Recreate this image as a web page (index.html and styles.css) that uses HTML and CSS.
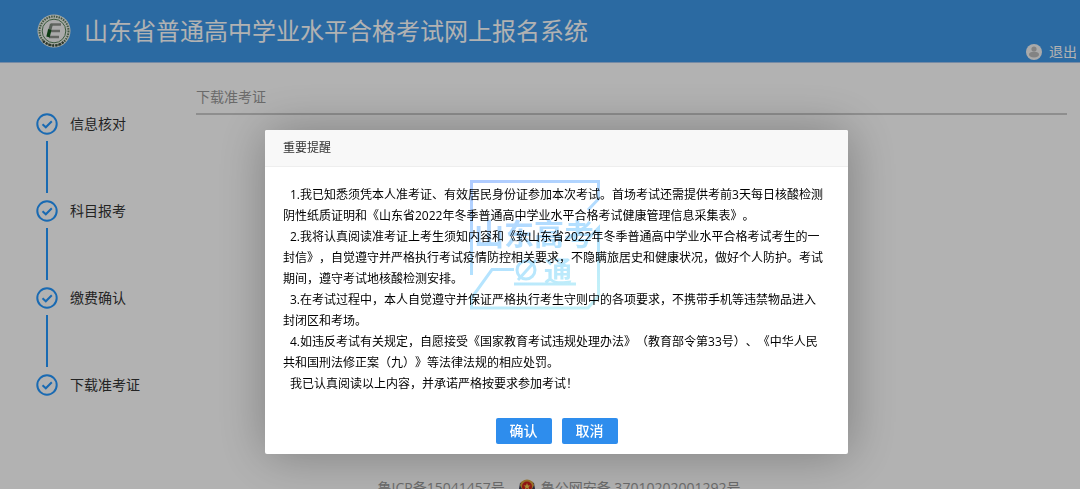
FILE: index.html
```
<!DOCTYPE html>
<html lang="zh-CN">
<head>
  <meta charset="UTF-8">
  <meta name="viewport" content="width=device-width, initial-scale=1.0">
  <title>山东省普通高中学业水平合格考试网上报名系统</title>
  <link rel="stylesheet" href="styles.css">
</head>
<body>
  <!-- Header -->
  <header class="header">
    <svg class="logo" viewBox="0 0 34 34" aria-hidden="true">
      <circle cx="17" cy="17" r="16.5" fill="#eef3ea"/>
      <circle cx="17" cy="17" r="14.5" fill="none" stroke="#5d7a60" stroke-width="2" stroke-dasharray="1.5 1"/>
      <circle cx="17" cy="17" r="11.8" fill="#f4f4f4" stroke="#54805a" stroke-width="1"/>
      <path d="M6 27Q17 36 28 27" fill="none" stroke="#3c4a3e" stroke-width="2.4" stroke-dasharray="2 1.4"/>
      <path d="M14 10.5H24M13 17H23M12 23H22" fill="none" stroke="#8d918c" stroke-width="2.4"/>
      <path d="M14.5 10L12.8 16" stroke="#7d8a7e" stroke-width="3"/>
      <path d="M12.8 15.5L11 23" stroke="#14571c" stroke-width="3.4"/>
    </svg>
    <h1 class="site-title">山东省普通高中学业水平合格考试网上报名系统</h1>
    <a href="#" class="logout">
      <svg class="avatar" viewBox="0 0 16 16" aria-hidden="true">
        <circle cx="8" cy="8" r="8" fill="#f4f4f4"/>
        <circle cx="8" cy="5" r="2.6" fill="#bcbcbc"/>
        <ellipse cx="8" cy="10.6" rx="5" ry="2.8" fill="#bcbcbc"/>
      </svg>
      退出
    </a>
  </header>

  <!-- Steps and page content -->
  <div class="page">
    <ol class="steps">
      <li class="step"><svg class="check" viewBox="0 0 22 22" aria-hidden="true"><circle cx="11" cy="11" r="9.7"/><path d="M6.5 11.3L9.8 14.3L15.8 8.3"/></svg>信息核对</li>
      <li class="step"><svg class="check" viewBox="0 0 22 22" aria-hidden="true"><circle cx="11" cy="11" r="9.7"/><path d="M6.5 11.3L9.8 14.3L15.8 8.3"/></svg>科目报考</li>
      <li class="step"><svg class="check" viewBox="0 0 22 22" aria-hidden="true"><circle cx="11" cy="11" r="9.7"/><path d="M6.5 11.3L9.8 14.3L15.8 8.3"/></svg>缴费确认</li>
      <li class="step"><svg class="check" viewBox="0 0 22 22" aria-hidden="true"><circle cx="11" cy="11" r="9.7"/><path d="M6.5 11.3L9.8 14.3L15.8 8.3"/></svg>下载准考证</li>
    </ol>
    <main class="content">
      <h2 class="content-title">下载准考证</h2>
    </main>
  </div>

  <footer class="footer">
    <span>鲁ICP备15041457号</span>
    <svg class="police" viewBox="0 0 18 18" aria-hidden="true">
      <path d="M9 1L16 4L17 10Q15 16 9 18Q3 16 1 10L2 4Z" fill="#3a3a55"/>
      <path d="M9 0.5Q15 1 16 6Q14 12 9 13Q4 12 2 6Q3 1 9 0.5Z" fill="#e0a63c"/>
      <circle cx="9" cy="7.5" r="5" fill="#d3221c"/>
      <path d="M9 4L10 6.5H12.5L10.5 8L11.2 10.5L9 9L6.8 10.5L7.5 8L5.5 6.5H8Z" fill="#f4cf4e"/>
    </svg>
    <span>鲁公网安备 37010202001292号</span>
  </footer>

  <!-- Dialog -->
  <div class="mask">
    <section class="dialog" role="dialog" aria-labelledby="dialog-title">
      <h2 class="dialog-title" id="dialog-title">重要提醒</h2>
      <div class="dialog-body">
        <p>1.我已知悉须凭本人准考证、有效居民身份证参加本次考试。首场考试还需提供考前3天每日核酸检测阴性纸质证明和《山东省2022年冬季普通高中学业水平合格考试健康管理信息采集表》。</p>
        <p>2.我将认真阅读准考证上考生须知内容和《致山东省2022年冬季普通高中学业水平合格考试考生的一封信》，自觉遵守并严格执行考试疫情防控相关要求，不隐瞒旅居史和健康状况，做好个人防护。考试期间，遵守考试地核酸检测安排。</p>
        <p>3.在考试过程中，本人自觉遵守并保证严格执行考生守则中的各项要求，不携带手机等违禁物品进入封闭区和考场。</p>
        <p>4.如违反考试有关规定，自愿接受《国家教育考试违规处理办法》（教育部令第33号）、《中华人民共和国刑法修正案（九）》等法律法规的相应处罚。</p>
        <p>我已认真阅读以上内容，并承诺严格按要求参加考试！</p>
      </div>
      <div class="dialog-btns">
        <button type="button" class="btn">确认</button>
        <button type="button" class="btn">取消</button>
      </div>
      <svg class="watermark" viewBox="0 0 130 130">
        <defs>
          <linearGradient id="wm" gradientUnits="userSpaceOnUse" x1="20" y1="0" x2="70" y2="130">
            <stop offset="0" stop-color="#b0ccff"/>
            <stop offset="0.6" stop-color="#b3e2ff"/>
            <stop offset="1" stop-color="#c2f0f8"/>
          </linearGradient>
        </defs>
        <g fill="none" stroke="url(#wm)" stroke-width="3">
          <path d="M1.5 95V1.5H128.5V19L118 30"/>
          <path d="M118 59L128.5 48V116L118 128H1.5V118L22 89.5H44"/>
          <path d="M44 104H106"/>
          <circle cx="56" cy="90" r="9"/>
          <path d="M48 100L66 80"/>
        </g>
        <text class="wm-name" x="4" y="65" fill="url(#wm)">山东高考</text>
        <text class="wm-sub" x="74" y="102" fill="url(#wm)">通</text>
      </svg>
    </section>
  </div>
</body>
</html>
```
FILE: styles.css
```
*{
  box-sizing: border-box;
}
body{
  margin: 0;
  background: #fff;
  color: #333;
  font-family: "Open Sans", "Noto Sans CJK SC", sans-serif;
  font-size: 14px;
  line-height: 20px;
  text-spacing-trim: space-all;
  overflow: hidden;
}
h1, h2, p, ol{
  margin: 0;
  padding: 0;
  font-weight: 400;
}

/* header */
.header{
  display: flex;
  align-items: center;
  gap: 13px;
  height: 63px;
  padding: 0 3px 0 37px;
  background: #3e98e9;
  border-bottom: 1px solid #a8c8ee;
}
.logo{
  width: 34px;
  height: 34px;
}
.site-title{
  flex: 1;
  color: #fff;
  font-size: 24px;
  line-height: 36px;
}
.logout{
  display: flex;
  align-items: center;
  align-self: flex-end;
  gap: 7px;
  color: #fff;
  text-decoration: none;
}
.avatar{
  width: 16px;
  height: 16px;
}

/* steps */
.page{
  display: flex;
  min-height: 415px;
}
.steps{
  width: 196px;
  padding: 50px 0 0 36px;
  list-style: none;
}
.step{
  display: grid;
  grid-template-columns: 22px 1fr;
  column-gap: 12px;
  align-items: center;
}
.step:not(:last-child)::after{
  content: "";
  width: 2px;
  height: 52px;
  margin: 6px 0 7px 10px;
  background: #2598ff;
}
.check{
  width: 22px;
  height: 22px;
  fill: none;
  stroke: #2598ff;
  stroke-width: 2;
}
.content{
  flex: 1;
  padding: 24px 13px 0 0;
}
.content-title{
  padding-bottom: 6px;
  border-bottom: 2px solid #ccc;
  color: #999;
  font-size: 14px;
}

.footer{
  display: flex;
  justify-content: center;
  gap: 5px;
  padding-left: 38px;
  color: #999;
  white-space: nowrap;
}
.police{
  width: 18px;
  height: 18px;
  margin: 1px 0 0 8px;
}

/* dialog */
.mask{
  position: fixed;
  inset: 0;
  display: flex;
  align-items: flex-start;
  justify-content: center;
  padding: 130px 0 0 33px;
  background: rgba(0, 0, 0, 0.3);
}
.dialog{
  position: relative;
  width: 583px;
  max-width: 100%;
  background: #fff;
  border-radius: 2px;
  box-shadow: 1px 1px 50px rgba(0, 0, 0, 0.3);
}
.dialog-title{
  padding: 8px 18px;
  background: #f8f8f8;
  border-bottom: 1px solid #eee;
  border-radius: 2px 2px 0 0;
  font-size: 12px;
}
.dialog-body{
  padding: 17px 24px 0 18px;
  color: #000;
  font-size: 12px;
  line-height: 21px;
}
.dialog-body p{
  text-indent: 7px;
}
.dialog-btns{
  display: flex;
  justify-content: center;
  gap: 10px;
  padding: 24px 0 10px;
}
.btn{
  width: 56px;
  height: 26px;
  padding: 0;
  border: 0;
  border-radius: 2px;
  background: #2e8ded;
  color: #fff;
  font-family: inherit;
  font-size: 14px;
  font-weight: 500;
  line-height: 26px;
  cursor: pointer;
}

/* channel mark over the text */
.watermark{
  position: absolute;
  top: 50px;
  left: 205px;
  width: 130px;
  height: 130px;
  mix-blend-mode: multiply;
  pointer-events: none;
}
.wm-name{
  font-size: 30px;
  font-weight: 700;
}
.wm-sub{
  font-size: 28px;
  font-weight: 700;
}
```
